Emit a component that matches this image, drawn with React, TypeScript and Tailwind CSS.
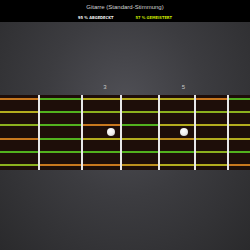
const O = '#c8781e';
const Y = '#b4ac1e';
const G = '#52b01e';
const YG = '#8cb01e';
const OY = '#bc901e';

// colour of each string segment, one row per string, one entry per fret column
const strings: string[][] = [
  [O, G, Y, Y, Y, O, G],
  [Y, G, YG, YG, YG, YG, YG],
  [YG, G, O, G, Y, Y, Y],
  [O, G, Y, Y, OY, Y, Y],
  [G, G, G, G, G, YG, G],
  [YG, O, O, OY, Y, Y, O],
];

const columns = ['w-[40px]', 'w-[43px]', 'w-[39px]', 'w-[38px]', 'w-[36px]', 'w-[33px]', 'flex-1'];

function FretColumn({ index }: { index: number }) {
  const last = index === columns.length - 1;
  return (
    <div
      className={`${columns[index]} ${last ? '' : 'border-r-2 border-[#e8e8e8]'} flex flex-col justify-between pt-[3px] pb-[4px] shrink-0`}
    >
      {strings.map((row, i) => (
        <div key={i} className="h-[2px] w-full" style={{ backgroundColor: row[index] }} />
      ))}
    </div>
  );
}

function Dot({ className }: { className: string }) {
  return (
    <div
      className={`absolute top-[33px] w-[8px] h-[8px] rounded-full bg-[radial-gradient(circle_at_40%_35%,#ffffff_0%,#f0f0f0_50%,#b8b8b8_100%)] ${className}`}
    />
  );
}

export default function App() {
  return (
    <div className="w-[250px] h-[250px] flex flex-col overflow-hidden font-['Liberation_Sans',sans-serif] bg-[radial-gradient(ellipse_at_50%_42%,#505056_0%,#3c3c40_45%,#2a2a2c_100%)]">
      <div className="h-[22px] bg-black flex flex-col items-center pt-[3px] shrink-0">
        <div className="text-[6px] leading-[8px] text-[#d4d4d4]">Gitarre (Standard-Stimmung)</div>
        <div className="flex gap-[22px] mt-[4px] text-[4px] leading-[6px] font-bold font-['DejaVu_Sans_Condensed',sans-serif]">
          <span className="text-[#f0f0f0]">95 % ABGEDECKT</span>
          <span className="text-[#c4e000]">57 % GEMEISTERT</span>
        </div>
      </div>

      <div className="h-[73px] flex items-end pb-[4px] shrink-0">
        <div className="flex w-full text-[6px] leading-[8px] text-[#c8c8c8]">
          <div className="w-[87px]" />
          <div className="w-[36px] text-center">3</div>
          <div className="w-[43px]" />
          <div className="w-[35px] text-center">5</div>
        </div>
      </div>

      <div className="relative h-[75px] bg-[#1e0e09] flex shrink-0">
        {columns.map((_, i) => (
          <FretColumn key={i} index={i} />
        ))}
        <Dot className="left-[107px]" />
        <Dot className="left-[180px]" />
      </div>
    </div>
  );
}
